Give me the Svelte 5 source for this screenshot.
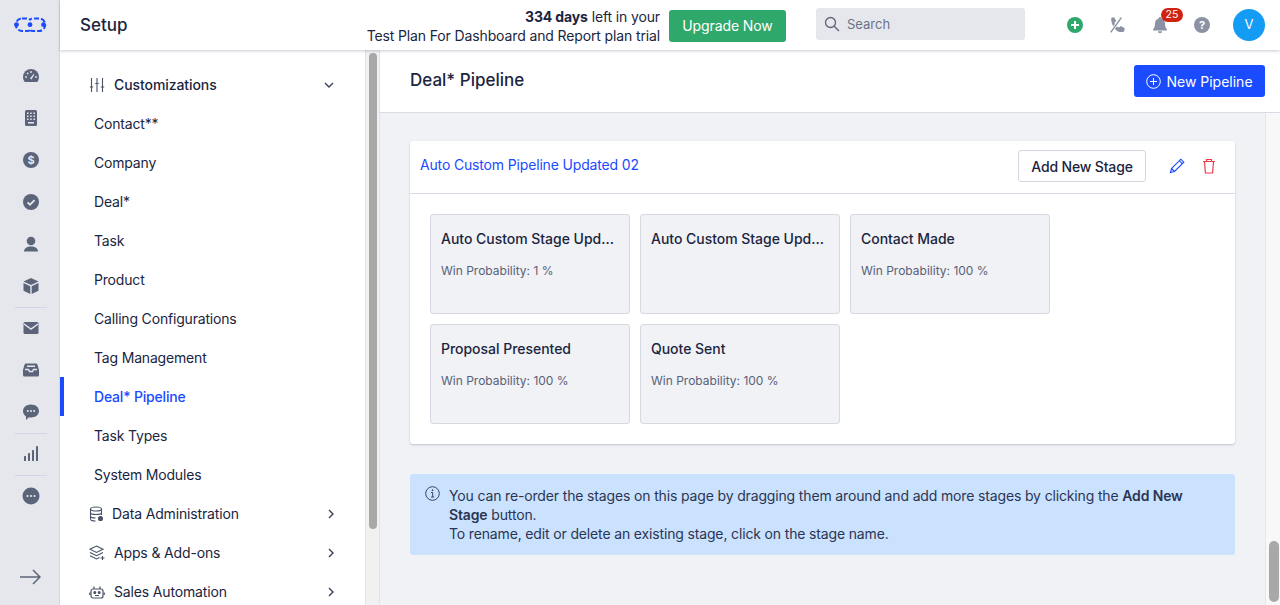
<script>
  const railTop = ['gauge', 'grid', 'dollar', 'check', 'user', 'box'];
  const railMid = ['mail', 'inbox', 'chat'];
  const items = ['Contact**', 'Company', 'Deal*', 'Task', 'Product', 'Calling Configurations', 'Tag Management', 'Deal* Pipeline', 'Task Types', 'System Modules'];
  const stages = [
    { name: 'Auto Custom Stage Updated 01', prob: 'Win Probability: 1 %' },
    { name: 'Auto Custom Stage Updated 02', prob: '' },
    { name: 'Contact Made', prob: 'Win Probability: 100 %' },
    { name: 'Proposal Presented', prob: 'Win Probability: 100 %' },
    { name: 'Quote Sent', prob: 'Win Probability: 100 %' }
  ];
</script>

{#snippet railIcon(name)}
  <svg width="18" height="18" viewBox="0 0 18 18" fill="#5c6479">
    {#if name === 'gauge'}
      <path d="M9 2a8 8 0 0 0-8 8c0 2 .7 3.700 1.800 5h12.400A8 8 0 0 0 17 10a8 8 0 0 0-8-8z" />
      <path d="M8 11.500l3.500-4.500 .8 .5-2.800 5z" fill="#e5e7ed" />
      <g fill="#e5e7ed"><circle cx="4" cy="10" r=".9" /><circle cx="5.600" cy="6.400" r=".9" /><circle cx="9" cy="5" r=".9" /><circle cx="14" cy="10" r=".9" /></g>
    {:else if name === 'grid'}
      <rect x="3" y="1" width="12" height="16" rx="1.500" />
      <g fill="#e5e7ed">
        {#each [3.500, 6.500, 9.500] as y}
          <rect x="5" y={y} width="1.500" height="1.500" /><rect x="8.200" y={y} width="1.500" height="1.500" /><rect x="11.500" y={y} width="1.500" height="1.500" />
        {/each}
        <rect x="6" y="13" width="6" height="1.500" />
      </g>
    {:else if name === 'dollar'}
      <circle cx="9" cy="9" r="8" />
      <text x="9" y="12.800" text-anchor="middle" class="glyph">$</text>
    {:else if name === 'check'}
      <circle cx="9" cy="9" r="8" />
      <path d="M5.500 9.300l2.500 2.400 4.600-4.600" fill="none" stroke="#e5e7ed" stroke-width="1.800" />
    {:else if name === 'user'}
      <circle cx="9" cy="6" r="4.300" />
      <path d="M2 16.500c0-3 3-4.500 5-5h4c2 .5 5 2 5 5z" />
    {:else if name === 'box'}
      <path d="M9 1l7.500 3.500L9 8 1.500 4.500z" />
      <path d="M1.500 6l6.800 3.200V17l-6.800-3.300zM16.500 6L9.700 9.200V17l6.800-3.300z" />
    {:else if name === 'mail'}
      <rect x="1.500" y="3" width="15" height="12" rx="1.500" />
      <path d="M2 5l7 5 7-5" fill="none" stroke="#e5e7ed" stroke-width="1.500" />
    {:else if name === 'inbox'}
      <path d="M4 2.500h10a1.500 1.500 0 0 1 1.400 1L17 9v5a1.500 1.500 0 0 1-1.500 1.500h-13A1.500 1.500 0 0 1 1 14V9l1.600-5.500A1.500 1.500 0 0 1 4 2.500z" />
      <path d="M3 8.500h3.500l1 2h3l1-2H15M5 5.200h8" fill="none" stroke="#e5e7ed" stroke-width="1.400" />
    {:else if name === 'chat'}
      <path d="M9 1.500c4.500 0 8 2.800 8 6.500s-3.500 6.500-8 6.500c-.8 0-1.500-.1-2.200-.2L4 17v-3.600C2 12.200 1 10.200 1 8c0-3.700 3.500-6.500 8-6.500z" />
      <g fill="#e5e7ed"><circle cx="5.800" cy="8" r="1" /><circle cx="9" cy="8" r="1" /><circle cx="12.200" cy="8" r="1" /></g>
    {:else if name === 'bars'}
      <rect x="2" y="11" width="2" height="5" rx=".5" /><rect x="6" y="8" width="2" height="8" rx=".5" /><rect x="10" y="5" width="2" height="11" rx=".5" /><rect x="14" y="1" width="2" height="15" rx=".5" />
    {:else if name === 'more'}
      <circle cx="9" cy="9" r="8.500" />
      <g fill="#e5e7ed"><circle cx="5.500" cy="9" r="1.100" /><circle cx="9" cy="9" r="1.100" /><circle cx="12.500" cy="9" r="1.100" /></g>
    {/if}
  </svg>
{/snippet}

<div class="app">
  <nav class="rail">
    <div class="logo">
      <svg width="34" height="16" viewBox="0 0 34 16" fill="none" stroke="#1a4bff" stroke-width="2">
        <path stroke-dasharray="5 2" d="M8 1.500H13Q16 1.500 16 3.500Q16 1.500 19 1.500H25A6.250 6.250 0 0 1 25 14H19Q16 14 16 12Q16 14 13 14H8A6.250 6.250 0 0 1 8 1.500z" />
        <g fill="#1a4bff" stroke="none"><circle cx="2.500" cy="7.700" r="2.400" /><circle cx="16" cy="7.700" r="2.400" /><circle cx="29.500" cy="7.700" r="2.400" /></g>
      </svg>
    </div>
    <div class="rail-list">
      {#each railTop as name}
        <div class="rail-item">{@render railIcon(name)}</div>
      {/each}
      <div class="sep"></div>
      {#each railMid as name}
        <div class="rail-item">{@render railIcon(name)}</div>
      {/each}
      <div class="sep"></div>
      <div class="rail-item">{@render railIcon('bars')}</div>
      <div class="sep"></div>
      <div class="rail-item">{@render railIcon('more')}</div>
    </div>
    <div class="rail-foot">
      <svg width="22" height="16" viewBox="0 0 22 16" fill="none" stroke="#5c6479" stroke-width="1.500"><path d="M1 8h20M14 1l7 7-7 7" /></svg>
    </div>
  </nav>

  <div class="shell">
    <header class="topbar">
      <h1>Setup</h1>
      <div class="trial">
        <div><b>334 days</b> left in your</div>
        <div>Test Plan For Dashboard and Report plan trial</div>
      </div>
      <button class="upgrade">Upgrade Now</button>
      <div class="search">
        <svg width="16" height="16" viewBox="0 0 16 16" fill="none" stroke="#5c6479" stroke-width="1.300"><circle cx="6.500" cy="6.500" r="5" /><path d="M10.200 10.200L15 15" /></svg>
        <span>Search</span>
      </div>
      <div class="tools">
        <svg class="t-plus" width="16" height="16" viewBox="0 0 16 16"><circle cx="8" cy="8" r="8" fill="#2fa86b" /><path d="M8 4v8M4 8h8" stroke="#fff" stroke-width="2" /></svg>
        <svg class="t-phone" width="18" height="18" viewBox="0 0 16 16" fill="#8b92a3"><path d="M2 1.500l2.500-.5 2 3.500-1.800 1.500c.8 2 2 3.300 4 4.300l1.700-1.500 3.600 2-.5 2.700c-1 1-3 1-5 .5C4.500 12 1.500 6 2 1.500z" /><path d="M1.500 14.500L11 1.500" stroke="#fff" stroke-width="2.600" /><path d="M1.500 14.500L11 1.500" stroke="#8b92a3" stroke-width="1.300" /></svg>
        <div class="bell">
          <svg width="16" height="16" viewBox="0 0 16 16" fill="#8b92a3"><path d="M8 0a1.300 1.300 0 0 1 1.300 1.400C11.500 2 13 4 13 6.500c0 3 .8 4.500 2 6v1H1v-1c1.200-1.500 2-3 2-6C3 4 4.500 2 6.700 1.400A1.300 1.300 0 0 1 8 0z" /><path d="M6 14.300h4a2 2 0 0 1-4 0z" /></svg>
          <span class="count">25</span>
        </div>
        <svg class="t-help" width="16" height="16" viewBox="0 0 16 16"><circle cx="8" cy="8" r="8" fill="#8b92a3" /><text x="8" y="12" text-anchor="middle" class="help-q">?</text></svg>
        <div class="avatar">V</div>
      </div>
    </header>

    <div class="body">
      <aside class="side">
        <div class="group open">
          <svg width="16" height="16" viewBox="0 0 16 16" fill="none" stroke="#4a5268" stroke-width="1.100"><path d="M2.500 1v14M8 1v14M13.500 1v14M.8 10h3.400M6.300 6.500h3.400M11.800 10h3.400" /></svg>
          <span>Customizations</span>
          <svg class="chev" width="10" height="10" viewBox="0 0 10 10" fill="none" stroke="#3a4258" stroke-width="1.400"><path d="M1 3l4 4 4-4" /></svg>
        </div>
        {#each items as item}
          <div class="item" class:active={item === 'Deal* Pipeline'}>{item}</div>
        {/each}
        <div class="group tight">
          <svg width="16" height="16" viewBox="0 0 16 16" fill="none" stroke="#4a5268" stroke-width="1.100"><ellipse cx="7" cy="3" rx="5.500" ry="2" /><path d="M1.500 3v10c0 1 2 2 5 2M12.500 3v6M1.500 6.500c0 1 2.500 2 5.500 2s5.500-1 5.500-2M1.500 10c0 1 2 2 5 2" /><circle cx="11.500" cy="12.500" r="2" fill="#4a5268" /></svg>
          <span>Data Administration</span>
          <svg class="chev" width="10" height="10" viewBox="0 0 10 10" fill="none" stroke="#3a4258" stroke-width="1.400"><path d="M3 1l4 4-4 4" /></svg>
        </div>
        <div class="group">
          <svg width="16" height="16" viewBox="0 0 16 16" fill="none" stroke="#4a5268" stroke-width="1.100"><path d="M7.500 1l6.500 3.200-6.500 3.200L1 4.200zM1 7.500l6.500 3.200L14 7.500M1 10.800L7.500 14l3-1.500M13.500 11v4M11.500 13h4" /></svg>
          <span>Apps &amp; Add-ons</span>
          <svg class="chev" width="10" height="10" viewBox="0 0 10 10" fill="none" stroke="#3a4258" stroke-width="1.400"><path d="M3 1l4 4-4 4" /></svg>
        </div>
        <div class="group">
          <svg width="16" height="16" viewBox="0 0 16 16" fill="none" stroke="#4a5268" stroke-width="1.200"><rect x="2" y="5" width="12" height="9" rx="2" /><path d="M5 5V2.500M11 5V2.500M.8 8.500v2.500M15.200 8.500v2.500M6 11.500h4" /><circle cx="5.800" cy="8.500" r=".9" fill="#4a5268" /><circle cx="10.200" cy="8.500" r=".9" fill="#4a5268" /></svg>
          <span>Sales Automation</span>
          <svg class="chev" width="10" height="10" viewBox="0 0 10 10" fill="none" stroke="#3a4258" stroke-width="1.400"><path d="M3 1l4 4-4 4" /></svg>
        </div>
      </aside>
      <div class="side-scroll"><div class="thumb"></div></div>

      <main class="main">
        <div class="page-head">
          <h2>Deal* Pipeline</h2>
          <button class="primary">
            <svg width="15" height="15" viewBox="0 0 15 15" fill="none" stroke="#fff" stroke-width="1"><circle cx="7.500" cy="7.500" r="6.800" /><path d="M7.500 4v7M4 7.500h7" /></svg>
            New Pipeline
          </button>
        </div>
        <div class="page-row">
          <div class="content">
            <section class="card">
              <div class="card-head">
                <a href="#top" class="pipe-name">Auto Custom Pipeline Updated 02</a>
                <button class="outline">Add New Stage</button>
                <svg class="edit" width="16" height="16" viewBox="0 0 16 16" fill="none" stroke="#1a4bff" stroke-width="1.100"><path d="M1.500 14.500l1-4L11.800 1.200l3 3L5.500 13.500zM2.500 10.500l3 3M10.300 2.700l3 3" /></svg>
                <svg class="trash" width="14" height="16" viewBox="0 0 14 16" fill="none" stroke="#ef3b45" stroke-width="1.200"><path d="M1 3.500h12M4.500 3.500V1.500h5v2M2.500 3.500l.9 11.500h7.200l.9-11.500" /></svg>
              </div>
              <div class="stages">
                {#each stages as s}
                  <div class="stage">
                    <div class="stage-name">{s.name}</div>
                    {#if s.prob}<div class="stage-prob">{s.prob}</div>{/if}
                  </div>
                {/each}
              </div>
            </section>
            <div class="notice">
              <svg width="15" height="15" viewBox="0 0 15 15" fill="none" stroke="#3a4560" stroke-width="1"><circle cx="7.500" cy="7.500" r="6.800" /><path d="M6 6.500h1.700v4.500M6 11h3.200" /><circle cx="7.500" cy="4.200" r=".5" fill="#3a4560" /></svg>
              <p>You can re-order the stages on this page by dragging them around and add more stages by clicking the <b>Add New Stage</b> button.<br />To rename, edit or delete an existing stage, click on the stage name.</p>
            </div>
          </div>
          <div class="main-scroll"><div class="thumb"></div></div>
        </div>
      </main>
    </div>
  </div>
</div>

<style>
  :global(body) {
    margin: 0;
    overflow: hidden;
  }

  .app {
    display: flex;
    width: 1280px;
    height: 605px;
    overflow: hidden;
    font-family: Inter, "Noto Sans", sans-serif;
    font-size: 14px;
    color: #1b2540;
  }

  button {
    font-family: inherit;
    cursor: pointer;
  }

  .glyph {
    font: 700 11px Inter, sans-serif;
    fill: #e5e7ed;
  }

  .help-q {
    font: 700 11px Inter, sans-serif;
    fill: #fff;
  }

  .rail {
    flex: none;
    box-sizing: border-box;
    width: 60px;
    display: flex;
    flex-direction: column;
    background: #e5e7ed;
    border-right: 1px solid #d4d8e2;
  }

  .logo {
    height: 50px;
    padding: 17px 0 0 14px;
    box-sizing: border-box;
  }

  .rail-list {
    padding-top: 5px;
  }

  .rail-item {
    height: 42px;
    display: flex;
    align-items: center;
    justify-content: center;
    padding-left: 3px;
  }

  .sep {
    height: 1px;
    margin: 0 12px 0 15px;
    background: #cfd6e4;
    margin-bottom: -1px;
  }

  .rail-foot {
    margin-top: auto;
    height: 36px;
    display: flex;
    justify-content: center;
    padding-left: 1px;
  }

  .shell {
    flex: 1;
    min-width: 0;
    display: flex;
    flex-direction: column;
  }

  .topbar {
    position: relative;
    z-index: 2;
    flex: none;
    height: 50px;
    display: flex;
    align-items: center;
    background: #fff;
    box-shadow: 0 1px 3px rgba(60, 70, 100, 0.28);
  }

  h1 {
    margin: 0 0 0 20px;
    font-size: 17px;
    font-weight: 500;
    flex: 1;
  }

  .trial {
    text-align: right;
    font-size: 14px;
    letter-spacing: -0.13px;
    line-height: 19px;
    padding-top: 1px;
    margin-right: 1px;
  }

  .trial b {
    font-weight: 700;
  }

  .upgrade {
    box-sizing: border-box;
    width: 117px;
    height: 32px;
    margin-left: 8px;
    margin-top: 1px;
    border: 0;
    border-radius: 3px;
    background: #2fa86b;
    color: #fff;
    font-size: 14px;
    letter-spacing: -0.1px;
  }

  .search {
    box-sizing: border-box;
    width: 209px;
    height: 32px;
    margin-left: 30px;
    margin-bottom: 2px;
    padding-left: 8px;
    display: flex;
    align-items: center;
    gap: 7px;
    background: #e5e7ed;
    border-radius: 3px;
    color: #6b7285;
    font-size: 13px;
  }

  .tools {
    display: flex;
    align-items: center;
    width: 255px;
    box-sizing: border-box;
    padding-left: 42px;
  }

  .bell {
    position: relative;
    display: flex;
    margin-left: 25px;
  }

  .count {
    position: absolute;
    left: 9px;
    top: -9px;
    width: 22px;
    height: 14px;
    border-radius: 8px;
    background: #d0220f;
    color: #fff;
    font-size: 10.500px;
    line-height: 14px;
    text-align: center;
  }

  .t-phone {
    margin-left: 26px;
  }

  .t-help {
    margin-left: 26px;
  }

  .avatar {
    width: 32px;
    height: 32px;
    margin-left: 23px;
    border-radius: 50%;
    background: #149bf3;
    color: #fff;
    font-size: 13px;
    line-height: 30px;
    text-align: center;
  }

  .body {
    flex: 1;
    min-height: 0;
    display: flex;
  }

  .side {
    flex: none;
    width: 305px;
    box-sizing: border-box;
    padding: 15px 0 0 0;
    background: #fff;
    overflow: hidden;
  }

  .group {
    height: 39px;
    display: flex;
    align-items: center;
    gap: 9px;
    padding: 0 29px 0 29px;
    font-size: 14px;
    letter-spacing: -0.15px;
    color: #1b2540;
  }

  .group.open {
    font-weight: 500;
    letter-spacing: -0.08px;
    padding-right: 31px;
  }

  .group.tight {
    gap: 7px;
  }

  .chev {
    margin-left: auto;
  }

  .item {
    box-sizing: border-box;
    height: 39px;
    padding-left: 34px;
    line-height: 39px;
    font-size: 14px;
    letter-spacing: -0.18px;
  }

  .item.active {
    color: #1a4bff;
    font-weight: 500;
    border-left: 4px solid #1a4bff;
    padding-left: 30px;
  }

  .side-scroll {
    flex: none;
    width: 15px;
    box-sizing: border-box;
    background: #f1f1f1;
    padding: 3px 2px 0 3px;
    border-left: 1px solid #e1e3e8;
    border-right: 1px solid #e1e3e8;
  }

  .side-scroll .thumb {
    width: 8px;
    height: 476px;
    background: #a8a8a8;
    border-radius: 4px;
  }

  .main {
    flex: 1;
    min-width: 0;
    display: flex;
    flex-direction: column;
    background: #f0f2f6;
  }

  .page-head {
    flex: none;
    box-sizing: border-box;
    height: 63px;
    display: flex;
    align-items: center;
    justify-content: space-between;
    padding: 0 15px 2px 30px;
    background: #fff;
    border-bottom: 1px solid #d9dce5;
  }

  h2 {
    margin: 0;
    font-size: 17px;
    font-weight: 500;
  }

  .primary {
    box-sizing: border-box;
    width: 131px;
    height: 32px;
    display: flex;
    align-items: center;
    justify-content: center;
    gap: 5px;
    margin-top: 2px;
    border: 0;
    border-radius: 3px;
    background: #1a4bff;
    color: #fff;
    font-size: 14px;
  }

  .page-row {
    flex: 1;
    min-height: 0;
    display: flex;
  }

  .content {
    flex: 1;
    min-width: 0;
    box-sizing: border-box;
    padding: 28px 30px 0 30px;
  }

  .card {
    background: #fff;
    border-radius: 3px;
    box-shadow: 0 1px 2px rgba(50, 60, 90, 0.25);
  }

  .card-head {
    box-sizing: border-box;
    height: 53px;
    display: flex;
    align-items: center;
    padding: 0 19px 2px 10px;
    border-bottom: 1px solid #d9dce5;
  }

  .pipe-name {
    flex: 1;
    padding-bottom: 4px;
    color: #1a4bff;
    font-size: 14px;
    letter-spacing: -0.16px;
    text-decoration: none;
  }

  .outline {
    box-sizing: border-box;
    width: 128px;
    height: 32px;
    margin-right: 23px;
    border: 1px solid #d3d7e1;
    border-radius: 3px;
    background: #fff;
    color: #1b2540;
    font-size: 14px;
    letter-spacing: -0.15px;
    font-weight: 500;
  }

  .trash {
    margin-left: 17px;
  }

  .stages {
    display: flex;
    flex-wrap: wrap;
    gap: 10px;
    padding: 20px 20px 20px 20px;
  }

  .stage {
    box-sizing: border-box;
    width: 200px;
    height: 100px;
    padding: 15px 10px 0 10px;
    background: #f0f2f6;
    border: 1px solid #d6d9e2;
    border-radius: 3px;
  }

  .stage-name {
    font-size: 14px;
    font-weight: 500;
    line-height: 17px;
    letter-spacing: -0.03px;
    white-space: nowrap;
    overflow: hidden;
    text-overflow: ellipsis;
  }

  .stage-prob {
    margin-top: 16px;
    font-size: 12px;
    line-height: 15px;
    color: #596178;
  }

  .notice {
    display: flex;
    gap: 9px;
    margin-top: 30px;
    padding: 12px 20px 12px 15px;
    background: #cbe2ff;
    border-radius: 3px;
    color: #2a3553;
    font-size: 14px;
    letter-spacing: -0.15px;
  }

  .notice svg {
    flex: none;
  }

  .notice p {
    margin: 0;
    line-height: 19px;
  }

  .notice b {
    font-weight: 600;
  }

  .main-scroll {
    flex: none;
    width: 15px;
    box-sizing: border-box;
    display: flex;
    flex-direction: column;
    justify-content: flex-end;
    padding: 0 2px 3px 3px;
    background: #f8f8f8;
    border-left: 1px solid #e6e7ea;
  }

  .main-scroll .thumb {
    height: 61px;
    width: 10px;
    background: #a8a8a8;
    border-radius: 5px;
  }
</style>
